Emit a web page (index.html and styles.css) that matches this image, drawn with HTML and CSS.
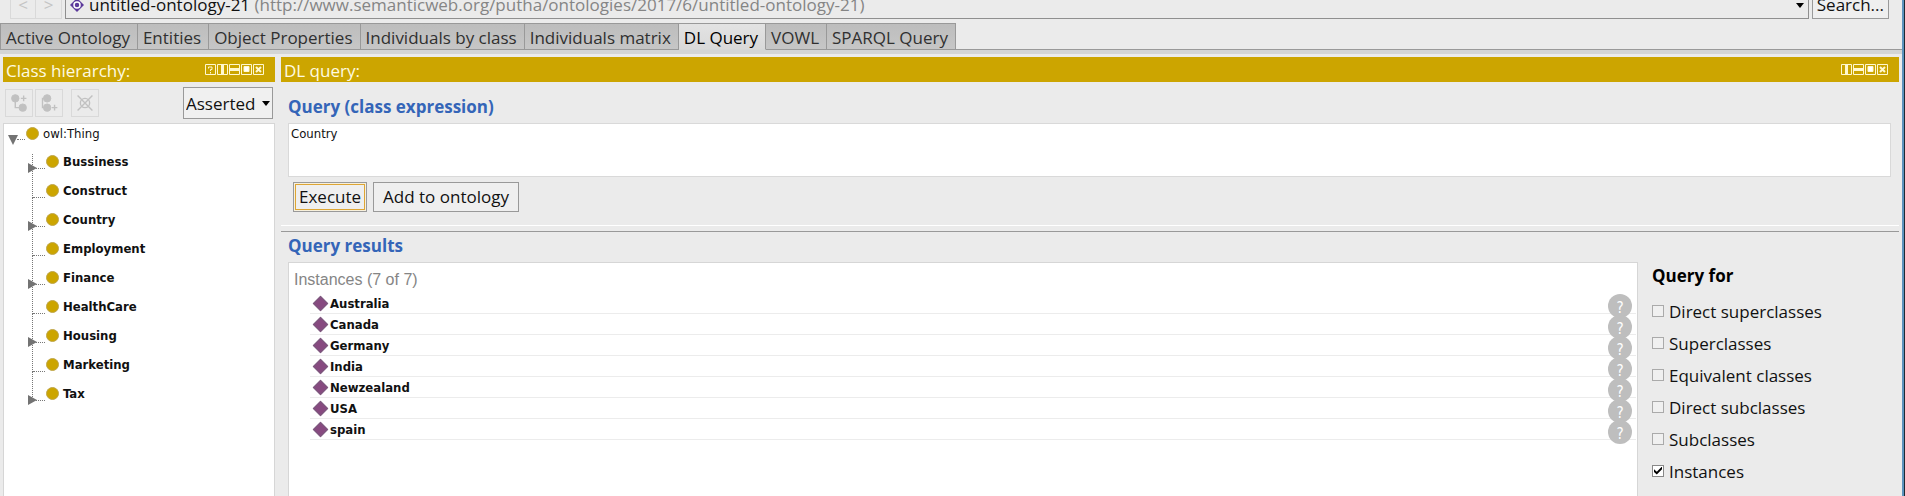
FILE: index.html
```html
<!DOCTYPE html>
<html lang="en">
<head>
<meta charset="utf-8">
<title>untitled-ontology-21</title>
<link rel="stylesheet" href="styles.css">
</head>
<body>
<svg class="defs" width="0" height="0" aria-hidden="true">
  <symbol id="w-help" viewBox="0 0 11 11"><path d="M.5.5h10v10H.5z" fill="none"/><path d="M3.500 4.500V3h3.500v2.500H5.500V7M5.500 8v1.500" fill="none"/></symbol>
  <symbol id="w-vert" viewBox="0 0 11 11"><path d="M.5.5h10v10H.5z" fill="none"/><path d="M5.500 1v9" stroke-width="3"/></symbol>
  <symbol id="w-horz" viewBox="0 0 11 11"><path d="M.5.5h10v10H.5z" fill="none"/><path d="M1 5.500h9" stroke-width="3"/></symbol>
  <symbol id="w-float" viewBox="0 0 11 11"><path d="M.5.5h10v10H.5z" fill="none"/><path d="M3 2.500h5v5H3z" fill="#fff"/></symbol>
  <symbol id="w-close" viewBox="0 0 11 11"><path d="M.5.5h10v10H.5z" fill="none"/><path d="M3 3l5 5M8 3L3 8" stroke-width="2"/></symbol>
</svg>
<div class="app">
  <header class="toolbar">
    <div class="history">
      <button type="button" disabled aria-label="Back">&lt;</button>
      <button type="button" disabled aria-label="Forward">&gt;</button>
    </div>
    <button type="button" class="ontology" aria-haspopup="listbox">
      <svg width="14" height="14" viewBox="0 0 14 14"><path d="M7 0l7 7-7 7-7-7z" fill="#5d3a9b"/><circle cx="7" cy="7" r="3" fill="none" stroke="#fff" stroke-width="1.500"/></svg>
      <span class="ontology-name">untitled-ontology-21 <span class="iri">(http://www.semanticweb.org/putha/ontologies/2017/6/untitled-ontology-21)</span></span>
      <svg width="8" height="5" viewBox="0 0 8 5"><path d="M0 0h8L4 5z"/></svg>
    </button>
    <button type="button" class="search">Search...</button>
  </header>
  <nav class="tabs" role="tablist">
    <button type="button" role="tab">Active Ontology</button>
    <button type="button" role="tab">Entities</button>
    <button type="button" role="tab">Object Properties</button>
    <button type="button" role="tab">Individuals by class</button>
    <button type="button" role="tab">Individuals matrix</button>
    <button type="button" role="tab" aria-selected="true">DL Query</button>
    <button type="button" role="tab">VOWL</button>
    <button type="button" role="tab">SPARQL Query</button>
  </nav>
  <main class="workspace">
    <section class="panel">
      <div class="panel-head">
        <h2>Class hierarchy:</h2>
        <div class="window-tools">
          <button type="button" aria-label="Help"><svg><use href="#w-help"/></svg></button>
          <button type="button" aria-label="Split vertically"><svg><use href="#w-vert"/></svg></button>
          <button type="button" aria-label="Split horizontally"><svg><use href="#w-horz"/></svg></button>
          <button type="button" aria-label="Float"><svg><use href="#w-float"/></svg></button>
          <button type="button" aria-label="Close"><svg><use href="#w-close"/></svg></button>
        </div>
      </div>
      <div class="tree-tools">
        <button type="button" disabled aria-label="Add subclass"><svg viewBox="0 0 28 28"><circle cx="10" cy="9" r="4"/><circle cx="18" cy="19" r="4"/><path d="M10 9v10h8M16 9h6M19 6v6"/></svg></button>
        <button type="button" disabled aria-label="Add sibling class"><svg viewBox="0 0 28 28"><circle cx="12" cy="9" r="4"/><circle cx="12" cy="19" r="4"/><path d="M12 9H7v10h5M17 19h6M20 16v6"/></svg></button>
        <button type="button" disabled class="apart" aria-label="Delete class"><svg viewBox="0 0 28 28"><circle cx="14" cy="14" r="5" class="ring"/><path d="M6 6l16 16M22 6L6 22"/></svg></button>
        <div class="mode">
          <select aria-label="Hierarchy mode"><option>Asserted</option></select>
          <svg width="8" height="5" viewBox="0 0 8 5"><path d="M0 0h8L4 5z"/></svg>
        </div>
      </div>
      <div class="tree">
        <div class="node root"><button type="button" class="toggle open" aria-label="Collapse owl:Thing"></button><i class="class-dot"></i>owl:Thing</div>
        <ul>
          <li class="node"><button type="button" class="toggle" aria-label="Expand Bussiness"></button><i class="class-dot"></i>Bussiness</li>
          <li class="node"><i class="class-dot"></i>Construct</li>
          <li class="node"><button type="button" class="toggle" aria-label="Expand Country"></button><i class="class-dot"></i>Country</li>
          <li class="node"><i class="class-dot"></i>Employment</li>
          <li class="node"><button type="button" class="toggle" aria-label="Expand Finance"></button><i class="class-dot"></i>Finance</li>
          <li class="node"><i class="class-dot"></i>HealthCare</li>
          <li class="node"><button type="button" class="toggle" aria-label="Expand Housing"></button><i class="class-dot"></i>Housing</li>
          <li class="node"><i class="class-dot"></i>Marketing</li>
          <li class="node"><button type="button" class="toggle" aria-label="Expand Tax"></button><i class="class-dot"></i>Tax</li>
        </ul>
      </div>
    </section>
    <section class="panel">
      <div class="panel-head">
        <h2>DL query:</h2>
        <div class="window-tools">
          <button type="button" aria-label="Split vertically"><svg><use href="#w-vert"/></svg></button>
          <button type="button" aria-label="Split horizontally"><svg><use href="#w-horz"/></svg></button>
          <button type="button" aria-label="Float"><svg><use href="#w-float"/></svg></button>
          <button type="button" aria-label="Close"><svg><use href="#w-close"/></svg></button>
        </div>
      </div>
      <form class="query">
        <label class="section-title" for="expression">Query (class expression)</label>
        <textarea id="expression" spellcheck="false">Country</textarea>
        <div class="actions">
          <button type="button" class="focused">Execute</button>
          <button type="button">Add to ontology</button>
        </div>
      </form>
      <div class="splitter"></div>
      <div class="results">
        <div class="results-main">
          <h3 class="section-title">Query results</h3>
          <div class="result-box">
            <p>Instances (7 of 7)</p>
            <ul>
              <li><i class="diamond"></i>Australia<button type="button" aria-label="Explain Australia">?</button></li>
              <li><i class="diamond"></i>Canada<button type="button" aria-label="Explain Canada">?</button></li>
              <li><i class="diamond"></i>Germany<button type="button" aria-label="Explain Germany">?</button></li>
              <li><i class="diamond"></i>India<button type="button" aria-label="Explain India">?</button></li>
              <li><i class="diamond"></i>Newzealand<button type="button" aria-label="Explain Newzealand">?</button></li>
              <li><i class="diamond"></i>USA<button type="button" aria-label="Explain USA">?</button></li>
              <li><i class="diamond"></i>spain<button type="button" aria-label="Explain spain">?</button></li>
            </ul>
          </div>
        </div>
        <fieldset class="filters">
          <legend>Query for</legend>
          <label><input type="checkbox">Direct superclasses</label>
          <label><input type="checkbox">Superclasses</label>
          <label><input type="checkbox">Equivalent classes</label>
          <label><input type="checkbox">Direct subclasses</label>
          <label><input type="checkbox">Subclasses</label>
          <label><input type="checkbox" checked>Instances</label>
        </fieldset>
      </div>
    </section>
  </main>
</div>
</body>
</html>
```

FILE: styles.css
```css
* { box-sizing: border-box; }

body {
  margin: 0;
  background: #ebebeb;
  color: #111;
  font: 17px/24px "Open Sans", "Noto Sans", sans-serif;
}

button, select, textarea { margin: 0; font: inherit; color: inherit; border-radius: 0; }
h2, h3, p, ul, fieldset, legend { margin: 0; padding: 0; border: 0; }
ul { list-style: none; }
svg { display: block; flex: none; }
.defs { position: absolute; }

.app {
  display: flex;
  flex-direction: column;
  height: 100vh;
  overflow: hidden;
  border-right: 1px solid #1d2a33;
  box-shadow: inset -2px 0 #5b93bd;
}

/* Top toolbar */
.toolbar {
  display: flex;
  flex: none;
  align-items: flex-end;
  gap: 3px;
  height: 19px;
  padding: 0 15px 0 10px;
}
.history { display: flex; }
.history button {
  width: 26px;
  height: 28px;
  padding: 0;
  border: 1px solid #d9d9d9;
  background: none;
  color: #c4c4c4;
}
.history button + button { border-left: 0; }
.ontology {
  display: flex;
  flex: 1;
  align-items: center;
  gap: 5px;
  height: 28px;
  padding: 0 4px;
  border: 1px solid #8f8f8f;
  background: none;
  text-align: left;
}
.ontology-name { flex: 1; }
.iri { color: #858585; }
.search {
  height: 28px;
  padding: 0 4px;
  border: 1px solid #9a9a9a;
  background: #efefef;
}

/* View tabs */
.tabs {
  display: flex;
  flex: none;
  height: 31px;
  padding-top: 4px;
  background: linear-gradient(#999, #999) 0 100% / 100% 1px no-repeat;
  margin-right: 2px;
}
.tabs button {
  padding: 2px 7px 0 5px;
  border: 1px solid #999;
  border-left-width: 0;
  background: linear-gradient(#bdbdbd, #c6c6c6);
  color: #303030;
}
.tabs button:first-child { border-left-width: 1px; }
.tabs button[aria-selected] {
  border-bottom-color: #d6d8d8;
  background: linear-gradient(#e3e3e3, #d9d9d9);
  color: #000;
}

/* Panels */
.workspace {
  display: grid;
  grid-template-columns: 272px minmax(0, 1fr);
  flex: 1;
  gap: 6px;
  min-height: 0;
  margin-right: 2px;
  padding: 3px 3px 0;
  border-top: 4px solid #d3d5d5;
}
.panel { display: flex; flex-direction: column; min-height: 0; }
.panel-head {
  display: flex;
  flex: none;
  align-items: center;
  justify-content: space-between;
  height: 25px;
  padding: 0 11px 0 3px;
  background: #cca500;
  color: #fffbe0;
}
.panel-head h2 { padding-top: 2px; font-size: 17px; font-weight: 400; }
.window-tools { display: flex; gap: 1px; }
.window-tools button { padding: 0; border: 0; background: none; }
.window-tools svg { width: 11px; height: 11px; stroke: #fff8cf; }

/* Class tree */
.tree-tools {
  display: flex;
  flex: none;
  align-items: center;
  gap: 2px;
  height: 41px;
  padding: 0 2px;
}
.tree-tools button {
  width: 28px;
  height: 28px;
  padding: 0;
  border: 1px solid #d9d9d9;
  background: none;
}
.tree-tools button svg { width: 26px; height: 26px; fill: #c1c1c1; stroke: #c1c1c1; }
.tree-tools button path, .tree-tools .ring { fill: none; stroke-width: 1.5; }
.tree-tools .apart { margin-left: 6px; }
.mode { position: relative; margin-left: auto; }
.mode select {
  appearance: none;
  width: 90px;
  height: 32px;
  padding: 2px 0 0 2px;
  border: 1px solid #999;
  background: #f0f0f0;
}
.mode svg { position: absolute; right: 3px; top: 14px; pointer-events: none; }

.tree {
  flex: 1;
  min-height: 0;
  border: 1px solid #d6d6d6;
  border-bottom: 0;
  background: #fff;
  font: 13px/18px "DejaVu Sans Condensed", "DejaVu Sans", sans-serif;
}
.node {
  position: relative;
  display: flex;
  align-items: center;
  gap: 4px;
  height: 29px;
}
.root { height: 19px; padding-left: 22px; }
.tree ul { padding: 4px 0 0 28px; font-weight: 700; }
.tree li { padding-left: 14px; }
.class-dot {
  width: 13px;
  height: 13px;
  border: 1px solid #bfa64a;
  border-radius: 50%;
  background: #cca500;
}
.node::after {
  content: "";
  position: absolute;
  left: 1px;
  top: 21px;
  width: 12px;
  border-top: 1px dotted #777;
}
.root::after { left: 13px; top: 15px; width: 8px; }
.tree li::before {
  content: "";
  position: absolute;
  left: 0;
  top: -7px;
  height: 29px;
  border-left: 1px dotted #777;
}
.tree li:first-child::before { top: 7px; height: 15px; }
.toggle {
  position: absolute;
  left: -4px;
  top: 16px;
  z-index: 1;
  width: 9px;
  height: 10px;
  padding: 0;
  border: 0;
  background: #737373;
  clip-path: polygon(0 0, 100% 50%, 0 100%);
}
.toggle.open { left: 4px; top: 11px; width: 10px; clip-path: polygon(0 0, 100% 0, 50% 100%); }

/* Query editor */
.section-title { color: #3465b8; font-size: 17px; font-weight: 700; }
.query { display: flex; flex-direction: column; padding: 13px 8px 13px 7px; }
.query textarea {
  height: 54px;
  margin-top: 4px;
  padding: 1px 2px;
  border: 1px solid #d9d9d9;
  outline: 0;
  resize: none;
  background: #fff;
  font: 13px/18px "DejaVu Sans Condensed", "DejaVu Sans", sans-serif;
}
.actions { display: flex; gap: 6px; padding: 5px 5px 0; }
.actions button {
  height: 30px;
  padding: 0 9px;
  border: 1px solid #999;
  background: #efefef;
}
.actions .focused { padding: 0 5px; box-shadow: inset 0 0 0 1px #f7f0dc, inset 0 0 0 2px #dda534; }
.splitter { flex: none; height: 7px; border-top: 1px solid #fff; border-bottom: 1px solid #999; }

/* Results */
.results { display: flex; flex: 1; gap: 14px; min-height: 0; padding-left: 7px; }
.results-main { display: flex; flex: 1; flex-direction: column; }
.results-main h3 { margin: 2px 0 4px; }
.result-box {
  flex: 1;
  min-height: 0;
  padding: 4px 1px 0 5px;
  border: 1px solid #d6d6d6;
  border-bottom: 0;
  background: #fff;
}
.result-box p { color: #858585; font: 16px/26px "Liberation Sans", Arial, sans-serif; }
.result-box ul { padding-left: 16px; font: 700 13px/18px "DejaVu Sans Condensed", "DejaVu Sans", sans-serif; }
.result-box li {
  display: flex;
  align-items: center;
  gap: 4px;
  height: 21px;
  padding: 1px 4px 0 5px;
  border-bottom: 1px solid #ececec;
}
.diamond { width: 11px; height: 11px; border: 1px solid #7b5a7d; background: #874a80; rotate: 45deg; }
.result-box button {
  width: 24px;
  height: 24px;
  margin: 5px 0 0 auto;
  padding: 4px 0 0;
  flex: none;
  border: 0;
  border-radius: 50%;
  background: #bebebe;
  color: #fff;
  font-size: 15px;
  font-weight: 400;
}

.filters { display: flex; flex-direction: column; width: 247px; padding-top: 32px; }
.filters legend { float: left; font-weight: 700; color: #000; margin-bottom: 8px; }
.filters label { display: flex; align-items: center; gap: 5px; height: 32px; }
.filters input {
  appearance: none;
  width: 12px;
  height: 12px;
  margin: 0 0 3px;
  border: 1px solid #aaa;
  background: #f0f0f0;
}
.filters input:checked { border-color: #888; background: #fff; }
.filters input:checked::after {
  content: "";
  display: block;
  width: 8px;
  height: 8px;
  margin: 1px;
  background: #000;
  clip-path: polygon(0 35%, 35% 65%, 100% 0, 100% 35%, 35% 100%, 0 70%);
}
```
